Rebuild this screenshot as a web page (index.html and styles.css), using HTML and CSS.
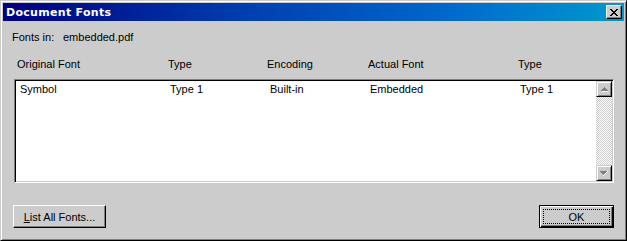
FILE: index.html
```html
<!DOCTYPE html>
<html>
<head>
    <title>Document Fonts</title>
    <link rel="stylesheet" href="styles.css">
</head>
<body>
    <div class="window">
        <!-- Title bar -->
        <div class="titlebar">
            <span class="title">Document Fonts</span>
            <span class="close-btn">
                <svg width="8" height="7" viewBox="0 0 8 7">
                    <path d="M0 0h2v1h-2zM6 0h2v1h-2zM1 1h2v1h-2zM5 1h2v1h-2zM2 2h4v1h-4zM3 3h2v1h-2zM2 4h4v1h-4zM1 5h2v1h-2zM5 5h2v1h-2zM0 6h2v1h-2zM6 6h2v1h-2z" fill="#000"/>
                </svg>
            </span>
        </div>

        <div class="content">
            <div class="fonts-in">
                <span class="fonts-label">Fonts in:</span>
                <span>embedded.pdf</span>
            </div>

            <!-- Column headers -->
            <div class="cols header-row">
                <span>Original Font</span>
                <span>Type</span>
                <span>Encoding</span>
                <span>Actual Font</span>
                <span>Type</span>
            </div>

            <!-- Font list -->
            <div class="listbox">
                <div class="list-rows">
                    <div class="cols font-row">
                        <span>Symbol</span>
                        <span>Type 1</span>
                        <span>Built-in</span>
                        <span>Embedded</span>
                        <span>Type 1</span>
                    </div>
                </div>
                <div class="scrollbar">
                    <span class="scroll-btn">
                        <svg width="7" height="5" viewBox="0 0 7 5"><path d="M3 0h1v1h1v1h1v1h1v1h-7v-1h1v-1h1v-1h1z" fill="#808080"/><path d="M1 4h7v1h-7z" fill="#fff"/></svg>
                    </span>
                    <span class="scroll-track"></span>
                    <span class="scroll-btn">
                        <svg width="8" height="5" viewBox="0 0 8 5"><path d="M0 0h7v1h-1v1h-1v1h-1v1h-1v-1h-1v-1h-1v-1h-1z" fill="#808080"/><path d="M7 0h1v1h-1v1h-1v1h-1v1h-1v1h-1v-1h1v-1h1v-1h1v-1h1z" fill="#fff"/></svg>
                    </span>
                </div>
            </div>

            <!-- Buttons -->
            <div class="button-row">
                <span class="btn btn-list"><u>L</u>ist All Fonts...</span>
                <span class="btn btn-default"><span class="focus">OK</span></span>
            </div>
        </div>
    </div>
</body>
</html>
```

FILE: styles.css
```css
body {
    margin: 0;
    padding: 0;
    font-family: "Liberation Sans", Arial, sans-serif;
    font-size: 11px;
    color: #000;
    background-color: #cccccc;
}
.window {
    width: 627px;
    height: 241px;
    box-sizing: border-box;
    border: 1px solid;
    border-color: #cccccc #000 #000 #cccccc;
    box-shadow: inset 1px 1px #fff, inset -1px -1px #808080;
    padding: 2px;
    background-color: #cccccc;
}
.titlebar {
    height: 18px;
    display: flex;
    align-items: center;
    justify-content: space-between;
    padding: 0 2px 0 3px;
    background: linear-gradient(to right, #000080 0%, #0040b0 40%, #0066cc 70%, #0099cc 100%);
}
.title {
    color: white;
    font-weight: bold;
    font-family: "DejaVu Sans", sans-serif;
    font-size: 11px;
    letter-spacing: 0.3px;
}
.close-btn {
    width: 16px;
    height: 14px;
    box-sizing: border-box;
    display: flex;
    align-items: center;
    justify-content: center;
    background-color: #cccccc;
    border: 1px solid;
    border-color: #fff #000 #000 #fff;
    box-shadow: inset -1px -1px #808080;
}
.content {
    padding: 0 10px 0 11px;
}
.fonts-in {
    display: flex;
    line-height: 13px;
    margin: 10px 0 0 -2px;
}
.fonts-label {
    width: 51px;
}
.cols {
    display: grid;
    grid-template-columns: 151px 99px 101px 150px 1fr;
    line-height: 13px;
}
.header-row {
    margin: 14px 0 0 3px;
}
.listbox {
    display: flex;
    height: 104px;
    box-sizing: border-box;
    margin-top: 8px;
    border: 1px solid;
    border-color: #808080 #fff #fff #808080;
    box-shadow: inset 1px 1px #000, inset -1px -1px #cccccc;
    padding: 2px;
    background-color: white;
}
.list-rows {
    flex: 1;
    padding: 0 0 0 3px;
}
.font-row {
    grid-template-columns: 150px 100px 100px 150px 1fr;
    padding-top: 1px;
}
.scrollbar {
    width: 16px;
    display: flex;
    flex-direction: column;
    margin: -1px -1px -1px 0;
}
.scroll-btn {
    width: 16px;
    height: 16px;
    box-sizing: border-box;
    display: flex;
    align-items: center;
    justify-content: center;
    background-color: #cccccc;
    border: 1px solid;
    border-color: #cccccc #000 #000 #cccccc;
    box-shadow: inset 1px 1px #fff, inset -1px -1px #808080;
}
.scroll-track {
    flex: 1;
    background-color: #fff;
    background-image: conic-gradient(#cccccc 25%, #fff 0 50%, #cccccc 0 75%, #fff 0);
    background-size: 2px 2px;
}
.button-row {
    display: flex;
    justify-content: space-between;
    margin: 22px 0 0 -1px;
}
.btn {
    height: 23px;
    box-sizing: border-box;
    display: flex;
    align-items: center;
    justify-content: center;
    background-color: #cccccc;
    border: 1px solid;
    border-color: #fff #000 #000 #fff;
    box-shadow: inset -1px -1px #808080;
}
.btn-list {
    width: 93px;
}
.btn-default {
    width: 75px;
    border-color: #000;
    box-shadow: inset 1px 1px #fff, inset -1px -1px #000, inset -2px -2px #808080;
    padding: 3px;
}
.focus {
    width: 100%;
    height: 100%;
    box-sizing: border-box;
    border: 1px dotted #000;
    display: flex;
    align-items: center;
    justify-content: center;
}
```
